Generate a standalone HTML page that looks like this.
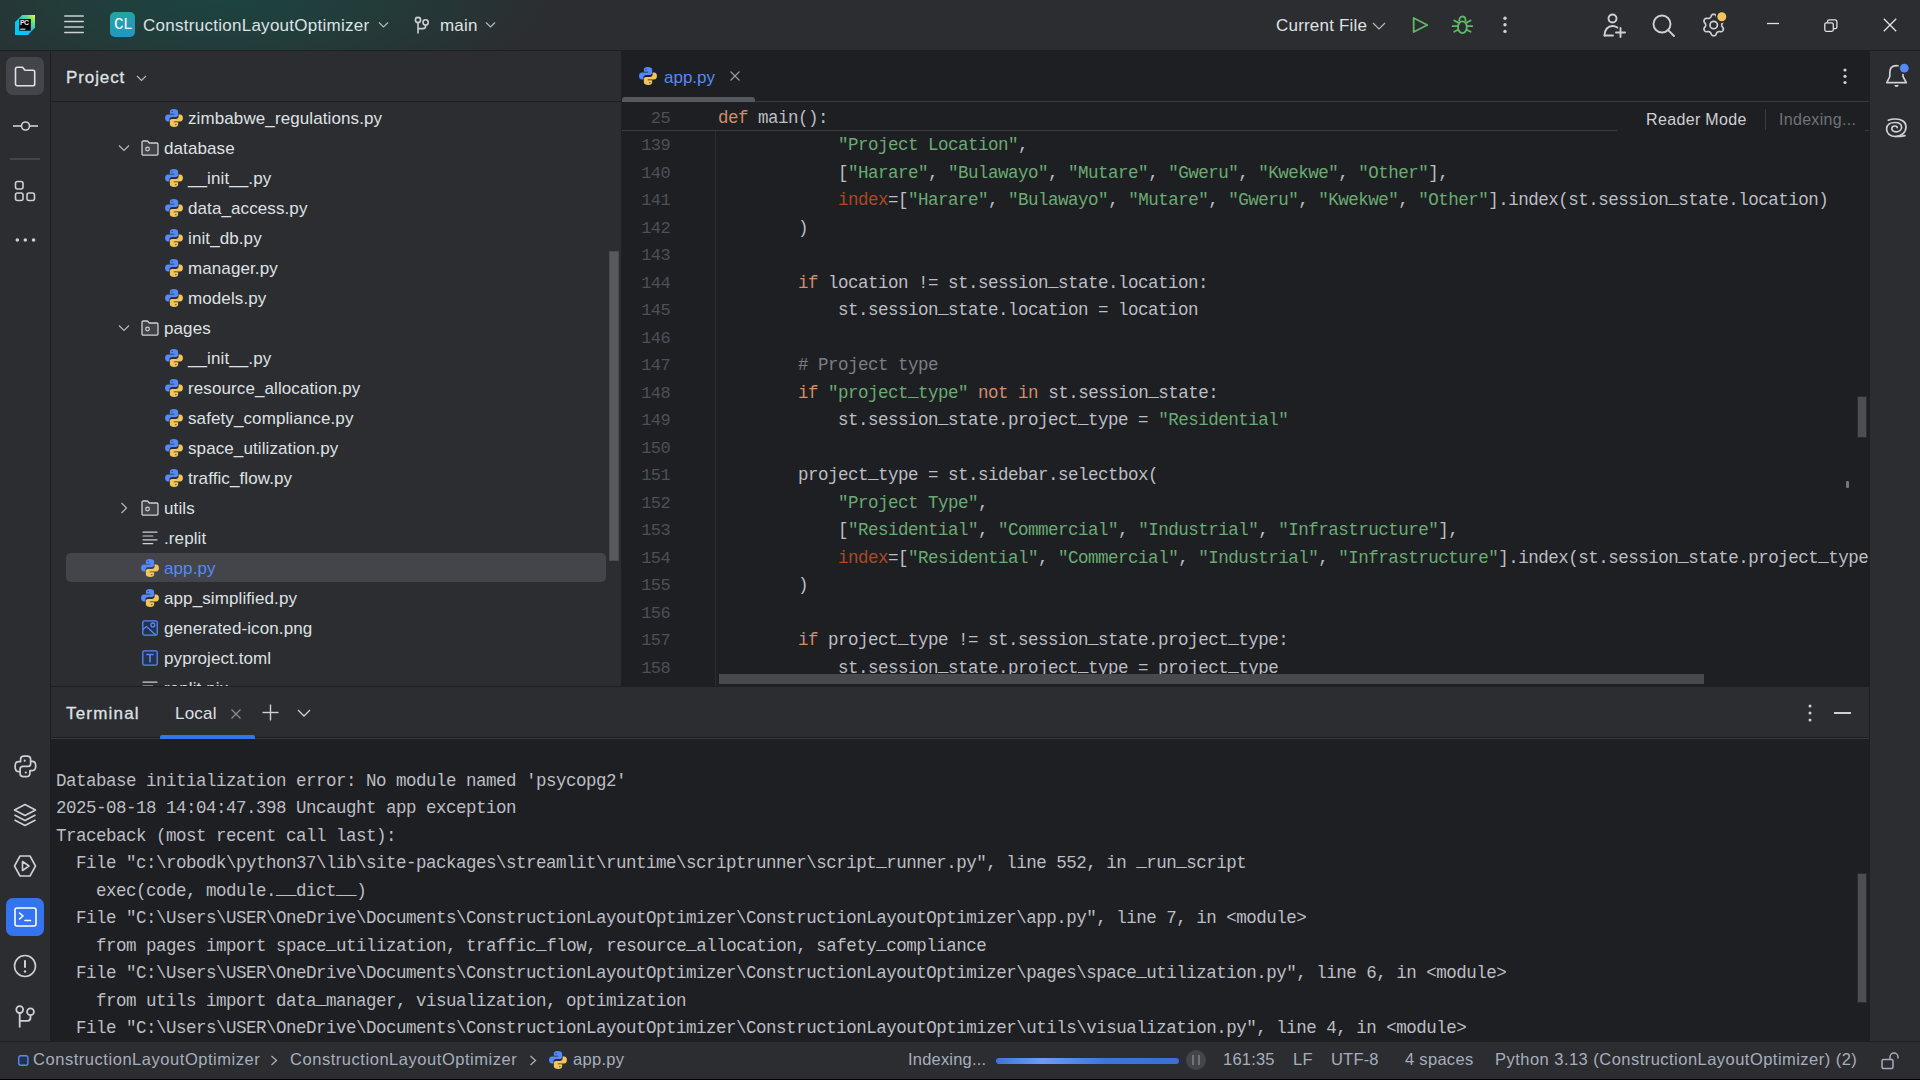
<!DOCTYPE html>
<html><head><meta charset="utf-8">
<style>
*{margin:0;padding:0;box-sizing:border-box}
html,body{width:1920px;height:1080px;overflow:hidden;background:#2B2D30;font-family:"Liberation Sans",sans-serif;color:#DFE1E5}
.a{position:absolute}
.ui{position:absolute;font-family:"Liberation Sans",sans-serif;font-size:17px;white-space:nowrap;line-height:20px}
.mono{font-family:"Liberation Mono",monospace;white-space:pre}
svg{position:absolute;overflow:visible}
.row{position:absolute;height:30px;line-height:30px;font-size:17px;letter-spacing:0.1px;white-space:nowrap;color:#DFE1E5}
.code{position:absolute;left:96px;font-family:"Liberation Mono",monospace;font-size:17.5px;letter-spacing:-0.5px;white-space:pre;color:#BCBEC4;height:27.5px;line-height:27.5px}
.ln{position:absolute;left:0;width:48px;text-align:right;font-family:"Liberation Mono",monospace;font-size:17px;letter-spacing:-0.6px;color:#4B5059;height:27.5px;line-height:27.5px}
.u{position:relative;top:-2px}.k{color:#CF8E6D}.s{color:#6AAB73}.c{color:#7A7E85}.n{color:#AA4926}
.tl{position:absolute;left:5px;font-family:"Liberation Mono",monospace;font-size:17.5px;letter-spacing:-0.5px;white-space:pre;color:#BCBEC4;height:27.5px;line-height:27.5px}
</style></head><body>
<svg width="0" height="0" style="position:absolute;left:0;top:0"><defs>
<g id="pyi"><g transform="translate(9 9) scale(1.09) translate(-9 -9)"><path d="M8.6 0.8 C6.3 0.8 5.2 1.7 5.2 3.3 V5 H9.2 V5.9 H3.4 C1.8 5.9 0.8 7.1 0.8 9.1 C0.8 11.1 1.8 12.3 3.4 12.3 H4.8 V10.3 C4.8 8.9 5.8 8 7.2 8 H10.8 C12 8 12.8 7.2 12.8 6 V3.3 C12.8 1.7 11.3 0.8 8.6 0.8 Z" fill="#548AF7"/><path d="M9.4 17.2 C11.7 17.2 12.8 16.3 12.8 14.7 V13 H8.8 V12.1 H14.6 C16.2 12.1 17.2 10.9 17.2 8.9 C17.2 6.9 16.2 5.7 14.6 5.7 H13.2 V7.7 C13.2 9.1 12.2 10 10.8 10 H7.2 C6 10 5.2 10.8 5.2 12 V14.7 C5.2 16.3 6.7 17.2 9.4 17.2 Z" fill="#F2C55C"/><circle cx="7.3" cy="2.9" r="0.55" fill="#2B2D30"/><circle cx="10.7" cy="15.1" r="0.55" fill="#2B2D30"/></g></g>
<g id="fdi"><path d="M1 2.2 C1 1.5 1.5 1 2.2 1 H6.5 L8.3 3 H15.8 C16.5 3 17 3.5 17 4.2 V14 C17 14.6 16.5 15.1 15.8 15.1 H2.2 C1.5 15.1 1 14.6 1 14 Z" fill="#404247" stroke="#CED0D6" stroke-width="1.3" stroke-linejoin="round"/><circle cx="6.5" cy="9" r="1.8" fill="none" stroke="#CED0D6" stroke-width="1.2"/></g>
<g id="txi"><g stroke="#CED0D6" stroke-width="1.2" stroke-linecap="round"><line x1="1" y1="3.2" x2="15" y2="3.2"/><line x1="1" y1="7" x2="10.8" y2="7"/><line x1="1" y1="10.8" x2="15" y2="10.8"/><line x1="1" y1="14.6" x2="10.8" y2="14.6"/></g></g>
</defs></svg>
<div class="a" style="left:0;top:0;width:1920px;height:50px;background:radial-gradient(ellipse 340px 105px at 215px 0px,#1C4440 0%,#223C3A 45%,#2B2D30 100%)">
<svg style="left:15px;top:15px" width="20" height="20" viewBox="0 0 20 20">
<defs><linearGradient id="pcg" x1="0" y1="1" x2="1" y2="0"><stop offset="0" stop-color="#00C8F8"/><stop offset="0.5" stop-color="#0BC6F0"/><stop offset="0.78" stop-color="#6FE07F"/><stop offset="1" stop-color="#FFF22E"/></linearGradient></defs>
<path d="M7.2 0 H20 V12.5 L13 20 H0 V7 Z" fill="url(#pcg)"/>
<rect x="4.2" y="4" width="11.6" height="11.7" fill="#000"/>
<text x="5" y="10.3" font-family="Liberation Sans" font-size="7" font-weight="bold" fill="#E8E8E8" letter-spacing="-0.6">PC</text>
<rect x="5.2" y="13.6" width="5.2" height="1.2" fill="#DDD"/>
</svg>
<svg style="left:64px;top:15px" width="20" height="20" viewBox="0 0 20 20"><g stroke="#CED0D6" stroke-width="1.6" stroke-linecap="round"><line x1="0.8" y1="1" x2="19.2" y2="1"/><line x1="0.8" y1="6.5" x2="19.2" y2="6.5"/><line x1="0.8" y1="12" x2="19.2" y2="12"/><line x1="0.8" y1="17.5" x2="19.2" y2="17.5"/></g></svg>
<div class="a" style="left:110px;top:12px;width:25px;height:25px;border-radius:5px;background:linear-gradient(160deg,#25A59A,#2196C9)"></div>
<div class="a mono" style="left:112px;top:13px;width:22px;height:24px;line-height:24px;font-size:16px;color:#fff;text-align:center;letter-spacing:-0.5px">CL</div>
<div class="ui" style="left:143px;top:16px;letter-spacing:0.27px">ConstructionLayoutOptimizer</div>
<svg style="left:378px;top:21px" width="11" height="8" viewBox="0 0 11 8"><path d="M1 1.5 L5.5 6 L10 1.5" fill="none" stroke="#B4B8BF" stroke-width="1.2"/></svg>
<svg style="left:413px;top:15px" width="18" height="20" viewBox="0 0 18 20"><g fill="none" stroke="#CED0D6" stroke-width="1.6" stroke-linejoin="round"><circle cx="5" cy="5" r="2.6"/><circle cx="12.6" cy="7.4" r="2.6"/><path d="M5 7.6 V18.6"/><path d="M12.6 10 V11 C12.6 12.6 11.8 13.6 10 13.6 H5"/></g></svg>
<div class="ui" style="left:440px;top:16px;letter-spacing:0.2px">main</div>
<svg style="left:485px;top:21px" width="11" height="8" viewBox="0 0 11 8"><path d="M1 1.5 L5.5 6 L10 1.5" fill="none" stroke="#B4B8BF" stroke-width="1.2"/></svg>
<div class="ui" style="left:1276px;top:16px;letter-spacing:0.2px">Current File</div>
<svg style="left:1372px;top:22px" width="14" height="8" viewBox="0 0 14 8"><path d="M1 1 L7 7 L13 1" fill="none" stroke="#B4B8BF" stroke-width="1.2"/></svg>
<svg style="left:1412px;top:16px" width="17" height="18" viewBox="0 0 17 18"><path d="M1.7 2 L15.3 9 L1.7 16 Z" fill="none" stroke="#5FB865" stroke-width="1.8" stroke-linejoin="round"/></svg>
<svg style="left:1451px;top:15px" width="23" height="20" viewBox="0 0 23 20"><g fill="none" stroke="#5FB865" stroke-width="1.8" stroke-linecap="round"><path d="M8.2 5.8 C8.2 3.2 9.6 1.5 11.4 1.5 C13.2 1.5 14.6 3.2 14.6 5.8"/><ellipse cx="11.4" cy="12.2" rx="4.4" ry="5.9"/><path d="M3.2 5.5 L7.2 7.6"/><path d="M1.6 11.2 H6.8"/><path d="M3.2 16.8 L7.2 14.8"/><path d="M19.6 5.5 L15.6 7.6"/><path d="M21.2 11.2 H16"/><path d="M19.6 16.8 L15.6 14.8"/></g></svg>
<svg style="left:1500px;top:15px" width="10" height="20" viewBox="0 0 10 20"><g fill="#CED0D6"><circle cx="5" cy="3.2" r="1.7"/><circle cx="5" cy="9.8" r="1.7"/><circle cx="5" cy="16.4" r="1.7"/></g></svg>
<svg style="left:1603px;top:13px" width="24" height="25" viewBox="0 0 24 25"><g fill="none" stroke="#CED0D6" stroke-width="1.9" stroke-linecap="round"><circle cx="9.5" cy="5.5" r="4"/><path d="M1.5 22.5 C1.5 16.5 5 13 9.5 13 C11.5 13 13 13.6 14.3 14.6"/><path d="M1.5 22.5 H10"/><line x1="17.5" y1="15" x2="17.5" y2="24"/><line x1="13" y1="19.5" x2="22" y2="19.5"/></g></svg>
<svg style="left:1652px;top:14px" width="24" height="24" viewBox="0 0 24 24"><g fill="none" stroke="#CED0D6" stroke-width="1.9" stroke-linecap="round"><circle cx="10" cy="10" r="8.5"/><line x1="16.2" y1="16.2" x2="22" y2="22"/></g></svg>
<svg style="left:1700px;top:11px" width="28" height="28" viewBox="0 0 28 28"><path d="M13.70 3.25 L14.17 3.29 L14.63 3.40 L15.07 3.59 L15.49 3.87 L15.86 4.24 L16.13 4.92 L16.35 5.61 L16.61 6.00 L16.88 6.33 L17.15 6.60 L17.43 6.83 L17.72 7.03 L18.04 7.19 L18.38 7.31 L18.75 7.41 L19.17 7.48 L19.65 7.51 L20.35 7.35 L21.07 7.24 L21.58 7.39 L22.03 7.61 L22.41 7.90 L22.74 8.24 L23.01 8.62 L23.21 9.05 L23.34 9.50 L23.40 9.98 L23.37 10.48 L23.24 10.99 L22.78 11.57 L22.29 12.10 L22.08 12.52 L21.93 12.92 L21.83 13.29 L21.77 13.65 L21.75 14.00 L21.77 14.35 L21.83 14.71 L21.93 15.08 L22.08 15.48 L22.29 15.90 L22.78 16.43 L23.24 17.01 L23.37 17.52 L23.40 18.02 L23.34 18.50 L23.21 18.95 L23.01 19.37 L22.74 19.76 L22.41 20.10 L22.03 20.39 L21.58 20.61 L21.07 20.76 L20.35 20.65 L19.65 20.49 L19.17 20.52 L18.75 20.59 L18.38 20.69 L18.04 20.81 L17.73 20.97 L17.43 21.17 L17.15 21.40 L16.88 21.67 L16.61 22.00 L16.35 22.39 L16.13 23.08 L15.86 23.76 L15.49 24.13 L15.07 24.41 L14.63 24.60 L14.17 24.71 L13.70 24.75 L13.23 24.71 L12.77 24.60 L12.33 24.41 L11.91 24.13 L11.54 23.76 L11.27 23.08 L11.05 22.39 L10.79 22.00 L10.52 21.67 L10.25 21.40 L9.97 21.17 L9.67 20.97 L9.36 20.81 L9.02 20.69 L8.65 20.59 L8.23 20.52 L7.75 20.49 L7.05 20.65 L6.33 20.76 L5.82 20.61 L5.37 20.39 L4.99 20.10 L4.66 19.76 L4.39 19.38 L4.19 18.95 L4.06 18.50 L4.00 18.02 L4.03 17.52 L4.16 17.01 L4.62 16.43 L5.11 15.90 L5.32 15.48 L5.47 15.08 L5.57 14.71 L5.63 14.35 L5.65 14.00 L5.63 13.65 L5.57 13.29 L5.47 12.92 L5.32 12.52 L5.11 12.10 L4.62 11.57 L4.16 10.99 L4.03 10.48 L4.00 9.98 L4.06 9.50 L4.19 9.05 L4.39 8.63 L4.66 8.24 L4.99 7.90 L5.37 7.61 L5.82 7.39 L6.33 7.24 L7.05 7.35 L7.75 7.51 L8.23 7.48 L8.65 7.41 L9.02 7.31 L9.36 7.19 L9.68 7.03 L9.97 6.83 L10.25 6.60 L10.52 6.33 L10.79 6.00 L11.05 5.61 L11.27 4.92 L11.54 4.24 L11.91 3.87 L12.33 3.59 L12.77 3.40 L13.23 3.29 Z" fill="none" stroke="#CED0D6" stroke-width="1.7" stroke-linejoin="round"/><circle cx="13.7" cy="14.0" r="3.7" fill="none" stroke="#CED0D6" stroke-width="1.7"/><circle cx="21.8" cy="5.7" r="6.3" fill="#2B2D30"/><circle cx="21.8" cy="5.7" r="4.5" fill="#F2C55C"/></svg>
<svg style="left:1766px;top:22px" width="14" height="3" viewBox="0 0 14 3"><line x1="1" y1="1.5" x2="13" y2="1.5" stroke="#DFE1E5" stroke-width="1.3"/></svg>
<svg style="left:1824px;top:19px" width="14" height="13" viewBox="0 0 14 13"><g fill="none" stroke="#DFE1E5" stroke-width="1.3"><rect x="0.8" y="3.8" width="8.5" height="8.5" rx="1.5"/><path d="M3.5 3.5 V2.5 C3.5 1.5 4.2 0.8 5.2 0.8 H11 C12.2 0.8 12.9 1.5 12.9 2.7 V8 C12.9 9 12.2 9.6 11.3 9.6 H9.5"/></g></svg>
<svg style="left:1883px;top:18px" width="14" height="14" viewBox="0 0 14 14"><g stroke="#DFE1E5" stroke-width="1.3"><line x1="0.8" y1="0.8" x2="13.2" y2="13.2"/><line x1="13.2" y1="0.8" x2="0.8" y2="13.2"/></g></svg>
</div>
<div class="a" style="left:0;top:50px;width:1920px;height:1px;background:#1E1F22"></div>
<div class="a" style="left:0;top:51px;width:51px;height:990px;background:#2B2D30;border-right:1px solid #1E1F22">
<div class="a" style="left:6px;top:6px;width:38px;height:38px;border-radius:7px;background:#43454A"></div>
<svg style="left:13px;top:15px" width="24" height="21" viewBox="0 0 24 21"><path d="M2.5 3 C2.5 2 3.2 1.3 4.2 1.3 H9.5 L12 4.3 H20 C21 4.3 21.7 5 21.7 6 V18 C21.7 19 21 19.7 20 19.7 H4.2 C3.2 19.7 2.5 19 2.5 18 Z" fill="none" stroke="#DFE1E5" stroke-width="1.6" stroke-linejoin="round"/></svg>
<svg style="left:12px;top:68px" width="27" height="14" viewBox="0 0 27 14"><g fill="none" stroke="#CED0D6" stroke-width="1.6"><circle cx="13.5" cy="7" r="4"/><line x1="1" y1="7" x2="9.5" y2="7"/><line x1="17.5" y1="7" x2="26" y2="7"/></g></svg>
<div class="a" style="left:10px;top:107px;width:30px;height:2px;background:#43454A"></div>
<svg style="left:14px;top:129px" width="23" height="23" viewBox="0 0 23 23"><g fill="none" stroke="#CED0D6" stroke-width="1.6"><rect x="1.5" y="1.5" width="7.5" height="7.5" rx="2"/><rect x="1.5" y="13" width="7.5" height="7.5" rx="2"/><rect x="13" y="13" width="7.5" height="7.5" rx="2"/></g></svg>
<svg style="left:14px;top:184px" width="24" height="10" viewBox="0 0 24 10"><g fill="#CED0D6"><circle cx="3.3" cy="5" r="1.8"/><circle cx="11.3" cy="5" r="1.8"/><circle cx="19.6" cy="5" r="1.8"/></g></svg>
<svg style="left:12px;top:702px" width="26" height="26" viewBox="0 0 26 26"><g fill="none" stroke="#CED0D6" stroke-width="1.7" stroke-linejoin="round"><path d="M8.6 8.6 V6.2 C8.6 4.2 10 3.1 12 3.1 H15.3 C17.3 3.1 18.6 4.2 18.6 6.2 V8.4 H20.3 C22.4 8.4 23.7 10.3 23.7 13 C23.7 15.8 22.4 17.6 20.3 17.6 H17.9 V20.2 C17.9 22.3 16.4 23.6 14.2 23.6 H11.4 C9.4 23.6 8.1 22.3 8.1 20.4 V18.6 H6.4 C4.3 18.6 3.1 16.6 3.1 13.6 C3.1 10.6 4.3 8.6 6.4 8.6 Z"/><path d="M18.6 8.4 V11 C18.6 12.4 17.7 13.3 16.2 13.3 H10.8 C9.2 13.3 8.1 14.3 8.1 15.9 V18.6"/></g><circle cx="12.7" cy="7.7" r="1.1" fill="#CED0D6"/><circle cx="13.8" cy="19.5" r="1.1" fill="#CED0D6"/></svg>
<svg style="left:13px;top:752px" width="24" height="25" viewBox="0 0 24 25"><g fill="none" stroke="#CED0D6" stroke-width="1.6" stroke-linejoin="round"><path d="M12 1.5 L22.5 7 L12 12.5 L1.5 7 Z"/><path d="M1.5 12 L12 17.5 L22.5 12"/><path d="M1.5 17 L12 22.5 L22.5 17"/></g></svg>
<svg style="left:13px;top:803px" width="24" height="24" viewBox="0 0 24 24"><g fill="none" stroke="#CED0D6" stroke-width="1.6" stroke-linejoin="round"><path d="M7 2 H17 L22.5 12 L17 22 H7 L1.5 12 Z"/><path d="M9.5 7.5 L16 12 L9.5 16.5 Z"/></g></svg>
<div class="a" style="left:6px;top:847px;width:38px;height:38px;border-radius:7px;background:#3574F0"></div>
<svg style="left:14px;top:856px" width="23" height="20" viewBox="0 0 23 20"><g fill="none" stroke="#FFFFFF" stroke-width="1.6" stroke-linejoin="round" stroke-linecap="round"><rect x="1" y="1" width="21" height="18" rx="2"/><path d="M5.5 6 L9 9 L5.5 12"/><line x1="11" y1="13.5" x2="16.5" y2="13.5"/></g></svg>
<svg style="left:13px;top:903px" width="24" height="24" viewBox="0 0 24 24"><g fill="none" stroke="#CED0D6" stroke-width="1.6"><circle cx="12" cy="12" r="10.5"/></g><rect x="11" y="6" width="2" height="8" rx="1" fill="#CED0D6"/><circle cx="12" cy="17.5" r="1.2" fill="#CED0D6"/></svg>
<svg style="left:14px;top:955px" width="24" height="24" viewBox="0 0 24 24"><g fill="none" stroke="#CED0D6" stroke-width="1.8" stroke-linejoin="round"><circle cx="5.7" cy="3.6" r="3.4"/><circle cx="16.5" cy="5.8" r="3.4"/><path d="M5.7 7 V21.5"/><path d="M16.5 9.2 V11.8 C16.5 13.7 15.5 14.8 13.5 14.8 H5.7"/></g></svg>
</div>
<div class="a" style="left:1869px;top:51px;width:51px;height:990px;background:#2B2D30;border-left:1px solid #1E1F22">
<svg style="left:13.5px;top:13px" width="26" height="26" viewBox="0 0 26 26"><g fill="none" stroke="#CED0D6" stroke-width="1.7" stroke-linejoin="round" stroke-linecap="round"><path d="M14 1.8 C13.6 1.7 13 1.6 12.3 1.6 C8.3 1.6 5.8 4.2 5.8 8.5 V12.5 L2.8 18.7 H22.3 L19 12.5 V10.5"/></g><path d="M10.4 21 A2.1 2.1 0 0 0 14.6 21 Z" fill="#CED0D6"/><circle cx="20.3" cy="4.2" r="4.4" fill="#548AF7"/></svg>
<svg style="left:14px;top:64px" width="24" height="24" viewBox="0 0 24 24"><g fill="none" stroke="#CED0D6" stroke-width="1.7" stroke-linecap="round"><path d="M4.3 5.2 C6.5 4.3 9 4 11.5 4 C17.5 4 22 6.5 22 12 C22 18 16.5 21.5 11.5 21.5 C6 21.5 2.6 18.5 2.6 14 C2.6 9.5 6.5 7.5 11 7.5 C15 7.5 17.6 9.3 17.6 12.3 C17.6 15 15 16.8 12 16.8 C9.4 16.8 7.8 15.5 7.8 13.5 C7.8 11.8 9.2 11 11 11 C12.3 11 13.2 11.6 13.2 12.6"/><path d="M11.5 21.5 C15 21.6 18.5 21.2 21 20.6"/></g></svg>
</div>
<div class="a" style="left:51px;top:51px;width:570px;height:635px;background:#2B2D30;overflow:hidden">
<div class="ui" style="left:15px;top:16.5px;font-size:17px;-webkit-text-stroke:0.3px #DFE1E5;letter-spacing:0.9px">Project</div>
<svg style="left:85px;top:24px" width="11" height="7" viewBox="0 0 11 7"><path d="M1 1 L5.5 5.5 L10 1" fill="none" stroke="#B4B8BF" stroke-width="1.2"/></svg>
<div class="a" style="left:0;top:50px;width:570px;height:1px;background:#1E1F22"></div>
<div class="a" style="left:15px;top:502px;width:540px;height:29px;border-radius:5px;background:#43454A"></div>
<svg style="left:114px;top:58px" width="18" height="18" viewBox="0 0 18 18"><use href="#pyi"/></svg>
<div class="row" style="left:137px;top:53.0px;">zimbabwe_regulations.py</div>
<svg style="left:67px;top:93px" width="12" height="8" viewBox="0 0 12 8"><path d="M1 1.5 L6 6.5 L11 1.5" fill="none" stroke="#B4B8BF" stroke-width="1.2"/></svg>
<svg style="left:90px;top:89px" width="18" height="16" viewBox="0 0 18 16"><use href="#fdi"/></svg>
<div class="row" style="left:113px;top:83.0px;">database</div>
<svg style="left:114px;top:118px" width="18" height="18" viewBox="0 0 18 18"><use href="#pyi"/></svg>
<div class="row" style="left:137px;top:113.0px;">__init__.py</div>
<svg style="left:114px;top:148px" width="18" height="18" viewBox="0 0 18 18"><use href="#pyi"/></svg>
<div class="row" style="left:137px;top:143.0px;">data_access.py</div>
<svg style="left:114px;top:178px" width="18" height="18" viewBox="0 0 18 18"><use href="#pyi"/></svg>
<div class="row" style="left:137px;top:173.0px;">init_db.py</div>
<svg style="left:114px;top:208px" width="18" height="18" viewBox="0 0 18 18"><use href="#pyi"/></svg>
<div class="row" style="left:137px;top:203.0px;">manager.py</div>
<svg style="left:114px;top:238px" width="18" height="18" viewBox="0 0 18 18"><use href="#pyi"/></svg>
<div class="row" style="left:137px;top:233.0px;">models.py</div>
<svg style="left:67px;top:273px" width="12" height="8" viewBox="0 0 12 8"><path d="M1 1.5 L6 6.5 L11 1.5" fill="none" stroke="#B4B8BF" stroke-width="1.2"/></svg>
<svg style="left:90px;top:269px" width="18" height="16" viewBox="0 0 18 16"><use href="#fdi"/></svg>
<div class="row" style="left:113px;top:263.0px;">pages</div>
<svg style="left:114px;top:298px" width="18" height="18" viewBox="0 0 18 18"><use href="#pyi"/></svg>
<div class="row" style="left:137px;top:293.0px;">__init__.py</div>
<svg style="left:114px;top:328px" width="18" height="18" viewBox="0 0 18 18"><use href="#pyi"/></svg>
<div class="row" style="left:137px;top:323.0px;">resource_allocation.py</div>
<svg style="left:114px;top:358px" width="18" height="18" viewBox="0 0 18 18"><use href="#pyi"/></svg>
<div class="row" style="left:137px;top:353.0px;">safety_compliance.py</div>
<svg style="left:114px;top:388px" width="18" height="18" viewBox="0 0 18 18"><use href="#pyi"/></svg>
<div class="row" style="left:137px;top:383.0px;">space_utilization.py</div>
<svg style="left:114px;top:418px" width="18" height="18" viewBox="0 0 18 18"><use href="#pyi"/></svg>
<div class="row" style="left:137px;top:413.0px;">traffic_flow.py</div>
<svg style="left:69px;top:451px" width="8" height="12" viewBox="0 0 8 12"><path d="M1.5 1 L6.5 6 L1.5 11" fill="none" stroke="#B4B8BF" stroke-width="1.2"/></svg>
<svg style="left:90px;top:449px" width="18" height="16" viewBox="0 0 18 16"><use href="#fdi"/></svg>
<div class="row" style="left:113px;top:443.0px;">utils</div>
<svg style="left:91px;top:478px" width="16" height="16" viewBox="0 0 16 16"><use href="#txi"/></svg>
<div class="row" style="left:113px;top:473.0px;">.replit</div>
<svg style="left:90px;top:508px" width="18" height="18" viewBox="0 0 18 18"><use href="#pyi"/></svg>
<div class="row" style="left:113px;top:503.0px;color:#548AF7">app.py</div>
<svg style="left:90px;top:538px" width="18" height="18" viewBox="0 0 18 18"><use href="#pyi"/></svg>
<div class="row" style="left:113px;top:533.0px;">app_simplified.py</div>
<svg style="left:91px;top:569px" width="16" height="16" viewBox="0 0 16 16"><rect x="0.8" y="0.8" width="14.4" height="14.4" rx="1.5" fill="#25324D" stroke="#548AF7" stroke-width="1.3"/><g fill="none" stroke="#548AF7" stroke-width="1.3"><path d="M0.8 9.5 L4.5 6.5 L13.8 15"/><circle cx="10.8" cy="4.9" r="1.9"/></g></svg>
<div class="row" style="left:113px;top:563.0px;">generated-icon.png</div>
<svg style="left:91px;top:599px" width="16" height="16" viewBox="0 0 16 16"><rect x="0.8" y="0.8" width="14.4" height="14.4" rx="1.5" fill="#25324D" stroke="#548AF7" stroke-width="1.3"/><path d="M4.3 4.5 H11.7 M8 4.5 V12.2" stroke="#548AF7" stroke-width="1.5" fill="none"/></svg>
<div class="row" style="left:113px;top:593.0px;">pyproject.toml</div>
<svg style="left:91px;top:628px" width="16" height="16" viewBox="0 0 16 16"><use href="#txi"/></svg>
<div class="row" style="left:113px;top:623.0px;">replit.nix</div>
<div class="a" style="left:558px;top:200px;width:10px;height:310px;background:#58595C;border:1px solid #4A4B4E"></div>
</div>
<div class="a" style="left:621px;top:51px;width:1px;height:635px;background:#1E1F22"></div>
<div class="a" style="left:622px;top:51px;width:1247px;height:635px;background:#1E1F22;overflow:hidden">
<svg style="left:17px;top:16px" width="18" height="18" viewBox="0 0 18 18"><use href="#pyi"/></svg>
<div class="ui" style="left:42px;top:17px;color:#548AF7">app.py</div>
<svg style="left:108px;top:20px" width="10" height="10" viewBox="0 0 10 10"><g stroke="#9A9EA6" stroke-width="1.1"><line x1="0.5" y1="0.5" x2="9.5" y2="9.5"/><line x1="9.5" y1="0.5" x2="0.5" y2="9.5"/></g></svg>
<div class="a" style="left:0;top:50px;width:1247px;height:1px;background:#393B40"></div>
<div class="a" style="left:0;top:46px;width:133px;height:5px;border-radius:3px 3px 0 0;background:#55585E"></div>
<svg style="left:1219px;top:17px" width="8" height="18" viewBox="0 0 8 18"><g fill="#CED0D6"><circle cx="4" cy="2" r="1.6"/><circle cx="4" cy="8.3" r="1.6"/><circle cx="4" cy="14.5" r="1.6"/></g></svg>
<div class="a" style="left:93px;top:80px;width:1px;height:560px;background:#2B2D30"></div>
<div class="a" style="left:0;top:79px;width:1247px;height:1px;background:#393B40"></div>
<div class="ln" style="top:53.6px">25</div>
<div class="code" style="top:53.6px"><span class="k">def</span> main():</div>
<div class="ln" style="top:81.10px">139</div>
<div class="code" style="top:81.10px">            <span class="s">"Project Location"</span>,</div>
<div class="ln" style="top:108.60px">140</div>
<div class="code" style="top:108.60px">            [<span class="s">"Harare"</span>, <span class="s">"Bulawayo"</span>, <span class="s">"Mutare"</span>, <span class="s">"Gweru"</span>, <span class="s">"Kwekwe"</span>, <span class="s">"Other"</span>],</div>
<div class="ln" style="top:136.10px">141</div>
<div class="code" style="top:136.10px">            <span class="n">index</span>=[<span class="s">"Harare"</span>, <span class="s">"Bulawayo"</span>, <span class="s">"Mutare"</span>, <span class="s">"Gweru"</span>, <span class="s">"Kwekwe"</span>, <span class="s">"Other"</span>].index(st.session<span class="u">_</span>state.location)</div>
<div class="ln" style="top:163.60px">142</div>
<div class="code" style="top:163.60px">        )</div>
<div class="ln" style="top:191.10px">143</div>
<div class="code" style="top:191.10px"></div>
<div class="ln" style="top:218.60px">144</div>
<div class="code" style="top:218.60px">        <span class="k">if</span> location != st.session<span class="u">_</span>state.location:</div>
<div class="ln" style="top:246.10px">145</div>
<div class="code" style="top:246.10px">            st.session<span class="u">_</span>state.location = location</div>
<div class="ln" style="top:273.60px">146</div>
<div class="code" style="top:273.60px"></div>
<div class="ln" style="top:301.10px">147</div>
<div class="code" style="top:301.10px">        <span class="c"># Project type</span></div>
<div class="ln" style="top:328.60px">148</div>
<div class="code" style="top:328.60px">        <span class="k">if</span> <span class="s">"project<span class="u">_</span>type"</span> <span class="k">not in</span> st.session<span class="u">_</span>state:</div>
<div class="ln" style="top:356.10px">149</div>
<div class="code" style="top:356.10px">            st.session<span class="u">_</span>state.project<span class="u">_</span>type = <span class="s">"Residential"</span></div>
<div class="ln" style="top:383.60px">150</div>
<div class="code" style="top:383.60px"></div>
<div class="ln" style="top:411.10px">151</div>
<div class="code" style="top:411.10px">        project<span class="u">_</span>type = st.sidebar.selectbox(</div>
<div class="ln" style="top:438.60px">152</div>
<div class="code" style="top:438.60px">            <span class="s">"Project Type"</span>,</div>
<div class="ln" style="top:466.10px">153</div>
<div class="code" style="top:466.10px">            [<span class="s">"Residential"</span>, <span class="s">"Commercial"</span>, <span class="s">"Industrial"</span>, <span class="s">"Infrastructure"</span>],</div>
<div class="ln" style="top:493.60px">154</div>
<div class="code" style="top:493.60px">            <span class="n">index</span>=[<span class="s">"Residential"</span>, <span class="s">"Commercial"</span>, <span class="s">"Industrial"</span>, <span class="s">"Infrastructure"</span>].index(st.session<span class="u">_</span>state.project<span class="u">_</span>type)</div>
<div class="ln" style="top:521.10px">155</div>
<div class="code" style="top:521.10px">        )</div>
<div class="ln" style="top:548.60px">156</div>
<div class="code" style="top:548.60px"></div>
<div class="ln" style="top:576.10px">157</div>
<div class="code" style="top:576.10px">        <span class="k">if</span> project<span class="u">_</span>type != st.session<span class="u">_</span>state.project<span class="u">_</span>type:</div>
<div class="ln" style="top:603.60px">158</div>
<div class="code" style="top:603.60px">            st.session<span class="u">_</span>state.project<span class="u">_</span>type = project<span class="u">_</span>type</div>
<div class="a" style="left:995px;top:51px;width:248px;height:29px;background:#1E1F22"></div>
<div class="ui" style="left:1024px;top:59px;font-size:16px;letter-spacing:0.35px;color:#CED0D6">Reader Mode</div>
<div class="a" style="left:1143px;top:58px;width:1px;height:21px;background:#393B40"></div>
<div class="ui" style="left:1157px;top:59px;font-size:16px;letter-spacing:0.3px;color:#6F737A">Indexing...</div>
<div class="a" style="left:1235px;top:345px;width:10px;height:42px;background:#4D4E51;border:1px solid #2B2C2F"></div>
<div class="a" style="left:1224px;top:430px;width:3px;height:7px;background:#6F7680;border-radius:1px"></div>
<div class="a" style="left:97px;top:623px;width:985px;height:10px;background:#48494C"></div>
</div>
<div class="a" style="left:51px;top:686px;width:1818px;height:355px;background:#1E1F22;overflow:hidden">
<div class="a" style="left:0;top:1px;width:1818px;height:50px;background:#2B2D30"></div>
<div class="a" style="left:0;top:51px;width:1818px;height:1px;background:#1E1F22"></div>
<div class="a" style="left:0;top:52px;width:1818px;height:1px;background:#393B40"></div>
<div class="ui" style="left:15px;top:18px;-webkit-text-stroke:0.3px #DFE1E5;letter-spacing:1.2px">Terminal</div>
<div class="ui" style="left:124px;top:18px;letter-spacing:0.2px">Local</div>
<svg style="left:180px;top:23px" width="10" height="10" viewBox="0 0 10 10"><g stroke="#868A91" stroke-width="1.2"><line x1="0.5" y1="0.5" x2="9.5" y2="9.5"/><line x1="9.5" y1="0.5" x2="0.5" y2="9.5"/></g></svg>
<svg style="left:211px;top:18px" width="17" height="17" viewBox="0 0 17 17"><g stroke="#CED0D6" stroke-width="1.4"><line x1="8.5" y1="0.5" x2="8.5" y2="16.5"/><line x1="0.5" y1="8.5" x2="16.5" y2="8.5"/></g></svg>
<svg style="left:246px;top:23px" width="14" height="8" viewBox="0 0 14 8"><path d="M1 1 L7 7 L13 1" fill="none" stroke="#CED0D6" stroke-width="1.3"/></svg>
<div class="a" style="left:109px;top:49px;width:95px;height:4px;border-radius:2px 2px 0 0;background:#3574F0"></div>
<svg style="left:1755px;top:17px" width="8" height="20" viewBox="0 0 8 20"><g fill="#CED0D6"><circle cx="4" cy="3" r="1.5"/><circle cx="4" cy="10" r="1.5"/><circle cx="4" cy="17" r="1.5"/></g></svg>
<div class="a" style="left:1783px;top:26px;width:17px;height:1.5px;background:#CED0D6"></div>
<div class="tl" style="top:81.50px">Database initialization error: No module named 'psycopg2'</div>
<div class="tl" style="top:109.00px">2025-08-18 14:04:47.398 Uncaught app exception</div>
<div class="tl" style="top:136.50px">Traceback (most recent call last):</div>
<div class="tl" style="top:164.00px">  File "c:\robodk\python37\lib\site-packages\streamlit\runtime\scriptrunner\script<span class="u">_</span>runner.py", line 552, in <span class="u">_</span>run<span class="u">_</span>script</div>
<div class="tl" style="top:191.50px">    exec(code, module.<span class="u">_</span><span class="u">_</span>dict<span class="u">_</span><span class="u">_</span>)</div>
<div class="tl" style="top:219.00px">  File "C:\Users\USER\OneDrive\Documents\ConstructionLayoutOptimizer\ConstructionLayoutOptimizer\app.py", line 7, in &lt;module&gt;</div>
<div class="tl" style="top:246.50px">    from pages import space<span class="u">_</span>utilization, traffic<span class="u">_</span>flow, resource<span class="u">_</span>allocation, safety<span class="u">_</span>compliance</div>
<div class="tl" style="top:274.00px">  File "C:\Users\USER\OneDrive\Documents\ConstructionLayoutOptimizer\ConstructionLayoutOptimizer\pages\space<span class="u">_</span>utilization.py", line 6, in &lt;module&gt;</div>
<div class="tl" style="top:301.50px">    from utils import data<span class="u">_</span>manager, visualization, optimization</div>
<div class="tl" style="top:329.00px">  File "C:\Users\USER\OneDrive\Documents\ConstructionLayoutOptimizer\ConstructionLayoutOptimizer\utils\visualization.py", line 4, in &lt;module&gt;</div>
<div class="a" style="left:1806px;top:187px;width:10px;height:130px;background:#4D4E51;border:1px solid #2B2C2F"></div>
</div>
<div class="a" style="left:0;top:1041px;width:1920px;height:39px;background:#2B2D30;border-top:1px solid #1E1F22">
<svg style="left:18px;top:13px" width="11" height="11" viewBox="0 0 11 11"><rect x="0.7" y="0.7" width="9.2" height="9.6" rx="2" fill="#25324D" stroke="#548AF7" stroke-width="1.4"/></svg>
<div class="ui" style="left:33px;top:7px;font-size:16.5px;letter-spacing:0.54px;color:#A8ADBD;">ConstructionLayoutOptimizer</div>
<svg style="left:270px;top:13px" width="8" height="11" viewBox="0 0 8 11"><path d="M1.5 1 L6.5 5.5 L1.5 10" fill="none" stroke="#A8ADBD" stroke-width="1.3"/></svg>
<div class="ui" style="left:290px;top:7px;font-size:16.5px;letter-spacing:0.54px;color:#A8ADBD;">ConstructionLayoutOptimizer</div>
<svg style="left:529px;top:13px" width="8" height="11" viewBox="0 0 8 11"><path d="M1.5 1 L6.5 5.5 L1.5 10" fill="none" stroke="#A8ADBD" stroke-width="1.3"/></svg>
<svg style="left:549px;top:9px" width="18" height="18" viewBox="0 0 18 18"><use href="#pyi"/></svg>
<div class="ui" style="left:573px;top:7px;font-size:16.5px;letter-spacing:0.3px;color:#A8ADBD;">app.py</div>
<div class="ui" style="left:908px;top:7px;font-size:16.5px;letter-spacing:0.2px;color:#A8ADBD;">Indexing...</div>
<div class="a" style="left:996px;top:16px;width:183px;height:5.5px;border-radius:3px;background:linear-gradient(90deg,#3F74D9,#6C9CF5 25%,#3F74D9 60%,#3B6FD6)"></div>
<div class="a" style="left:1186px;top:8px;width:20px;height:20px;border-radius:10px;background:#43454A"></div>
<div class="a" style="left:1192px;top:13px;width:2px;height:10px;background:#6F737A"></div>
<div class="a" style="left:1198px;top:13px;width:2px;height:10px;background:#6F737A"></div>
<div class="ui" style="left:1223px;top:7px;font-size:16.5px;letter-spacing:0.2px;color:#A8ADBD;">161:35</div>
<div class="ui" style="left:1293px;top:7px;font-size:16.5px;letter-spacing:0.2px;color:#A8ADBD;">LF</div>
<div class="ui" style="left:1331px;top:7px;font-size:16.5px;letter-spacing:0.2px;color:#A8ADBD;">UTF-8</div>
<div class="ui" style="left:1405px;top:7px;font-size:16.5px;letter-spacing:0.3px;color:#A8ADBD;">4 spaces</div>
<div class="ui" style="left:1495px;top:7px;font-size:16.5px;letter-spacing:0.47px;color:#A8ADBD;">Python 3.13 (ConstructionLayoutOptimizer) (2)</div>
<svg style="left:1881px;top:10px" width="19" height="18" viewBox="0 0 19 18"><g fill="none" stroke="#A8ADBD" stroke-width="1.5"><rect x="1" y="7.5" width="11" height="9" rx="1.5"/><path d="M9 7.5 V5 C9 2.8 10.8 1 13 1 C15.2 1 17 2.8 17 5 V6.5"/></g></svg>
</div>
<div class="a" style="left:0;top:1079px;width:1920px;height:1px;background:#000"></div>
</body></html>
